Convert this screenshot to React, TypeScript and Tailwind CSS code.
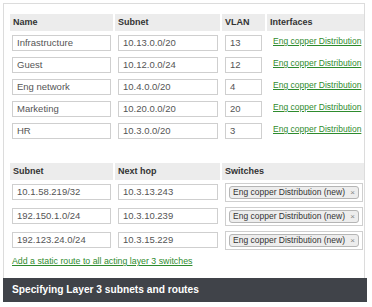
import React from "react";

const rows1 = [
  ["Infrastructure", "10.13.0.0/20", "13"],
  ["Guest", "10.12.0.0/24", "12"],
  ["Eng network", "10.4.0.0/20", "4"],
  ["Marketing", "10.20.0.0/20", "20"],
  ["HR", "10.3.0.0/20", "3"],
];

const rows2 = [
  ["10.1.58.219/32", "10.3.13.243"],
  ["192.150.1.0/24", "10.3.10.239"],
  ["192.123.24.0/24", "10.3.15.229"],
];

function Field({ value, w }: { value: string; w: string }) {
  return (
    <div
      className={`${w} h-[16px] border border-[#cfcfcf] bg-white flex items-center pl-[4px] text-[9.5px] text-[#555] whitespace-nowrap overflow-hidden`}
    >
      {value}
    </div>
  );
}

function Head({ label, w }: { label: string; w: string }) {
  return (
    <div className={`${w} h-[17px] bg-[#ececec] flex items-center pl-[3px] text-[9px] font-bold text-[#333] shrink-0`}>
      {label}
    </div>
  );
}

export default function App() {
  return (
    <div
      className="w-[372px] h-[307px] bg-white overflow-hidden"
      style={{ fontFamily: '"Liberation Sans", Arial, sans-serif' }}
    >
      <div className="ml-[3px] mt-[3px] w-[362px] h-[275px] border border-b-0 border-[#dcdcdc] overflow-hidden pt-[10px] pl-[6px]">
        {/* table 1 header */}
        <div className="flex gap-[2px] w-[420px]">
          <Head label="Name" w="w-[103px]" />
          <Head label="Subnet" w="w-[105px]" />
          <Head label="VLAN" w="w-[43px]" />
          <Head label="Interfaces" w="w-[160px]" />
        </div>
        <div className="mt-[4px]">
          {rows1.map((r) => (
            <div key={r[0]} className="flex gap-[2px] h-[22px] w-[420px]">
              <div className="w-[103px] pl-[2px] shrink-0">
                <Field value={r[0]} w="w-[99px]" />
              </div>
              <div className="w-[105px] pl-[3px] shrink-0">
                <Field value={r[1]} w="w-[100px]" />
              </div>
              <div className="w-[43px] pl-[3px] shrink-0">
                <Field value={r[2]} w="w-[37px]" />
              </div>
              <div className="w-[160px] pl-[6px] shrink-0 pt-[1px] text-[8.5px] leading-[10px]">
                <span className="text-[#2e8b2e] underline whitespace-nowrap">
                  Eng copper Distribution
                </span>
              </div>
            </div>
          ))}
        </div>
        {/* table 2 header */}
        <div className="flex gap-[2px] w-[420px] mt-[18px]">
          <Head label="Subnet" w="w-[103px]" />
          <Head label="Next hop" w="w-[105px]" />
          <Head label="Switches" w="w-[200px]" />
        </div>
        <div className="mt-[3px]">
          {rows2.map((r) => (
            <div key={r[0]} className="flex gap-[2px] h-[24px] w-[420px]">
              <div className="w-[103px] pl-[2px] shrink-0 pt-[1px]">
                <Field value={r[0]} w="w-[99px]" />
              </div>
              <div className="w-[105px] pl-[3px] shrink-0 pt-[1px]">
                <Field value={r[1]} w="w-[100px]" />
              </div>
              <div className="w-[200px] pl-[3px] shrink-0">
                <div className="w-[138px] h-[19px] border border-[#cfcfcf] bg-white pl-[3px] pt-[2px]">
                  <div className="w-[130px] h-[13px] bg-[#ededed] border border-[#b5b5b5] rounded-[3px] flex items-center pl-[3px] pr-[3px] text-[8.5px] text-[#333] whitespace-nowrap">
                    <span>Eng copper Distribution (new)</span>
                    <span className="ml-auto text-[8px] text-[#888] leading-none">×</span>
                  </div>
                </div>
              </div>
            </div>
          ))}
        </div>
        <div className="pl-[2px] mt-[1px] leading-[10px] text-[8.8px]">
          <span className="text-[#2e8b2e] underline whitespace-nowrap">
            Add a static route to all acting layer 3 switches
          </span>
        </div>
      </div>
      <div className="ml-[3px] w-[364px] h-[24px] bg-[#404349] flex items-center pl-[9px] text-[10.2px] font-bold text-white whitespace-nowrap">
        Specifying Layer 3 subnets and routes
      </div>
    </div>
  );
}
